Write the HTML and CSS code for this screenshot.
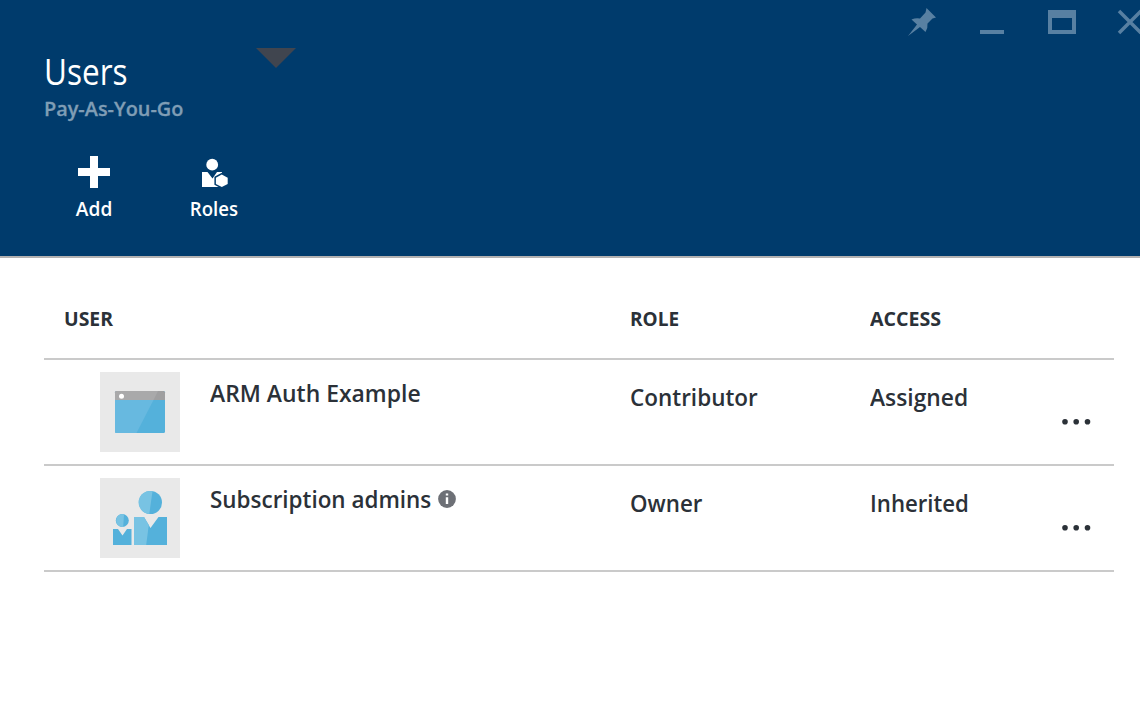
FILE: index.html
```html
<!DOCTYPE html>
<html lang="en">
<head>
<meta charset="utf-8">
<title>Users</title>
<link rel="stylesheet" href="styles.css">
</head>
<body>
<header class="blade-header">
  <svg class="pointer" width="40" height="20" viewBox="0 0 40 20"><path d="M0 0H40L20 20Z" fill="#40454f"/></svg>
  <svg class="window-controls" width="240" height="44" viewBox="0 0 240 44" fill="#5880a2">
    <path d="M26.500 8L36 17.500L32.500 18.500L27.500 23.500Q28 28 25.500 32L20 27L8 36L17 24.500L11.500 19.500Q16 17.500 20 18.500L25.500 12.500Z"/>
    <path d="M80 30H104V34H80Z"/>
    <path fill-rule="evenodd" d="M148 10H176V34H148ZM152 18V30H172V18Z"/>
    <path d="M219 11L241 33M241 11L219 33" stroke="#5880a2" stroke-width="3.500"/>
  </svg>
  <h1 class="title"><span class="fit t-users">Users</span></h1>
  <p class="subtitle"><span class="fit t-plan">Pay-As-You-Go</span></p>
  <nav class="toolbar">
    <a class="command">
      <svg width="32" height="36" viewBox="0 0 32 36" fill="#fff"><path d="M12 0H20V12H32V20H20V32H12V20H0V12H12Z"/></svg>
      <span class="label label-add">Add</span>
    </a>
    <a class="command">
      <svg width="32" height="36" viewBox="0 0 32 36" fill="#fff">
        <circle cx="14.200" cy="8.700" r="5.900"/>
        <path d="M4 16H9.500L14.500 22.500L19 16H24V31H4Z"/>
        <path d="M23.800 18.500L29.700 21.700V27.900L23.800 31L17.900 27.900V21.700Z" stroke="#003b6c" stroke-width="3" paint-order="stroke"/>
      </svg>
      <span class="label label-roles">Roles</span>
    </a>
  </nav>
</header>
<main class="grid">
  <div class="row head">
    <span class="fit h-user">USER</span><span class="fit h-role">ROLE</span><span class="fit h-access">ACCESS</span>
  </div>
  <div class="row item">
    <svg class="tile" width="80" height="80" viewBox="0 0 80 80">
      <rect width="80" height="80" fill="#e9e9e9"/>
      <rect x="15" y="19" width="50" height="42" rx="1.500" fill="#54b1db"/>
      <path d="M15 28H53.500L36.500 61H16.500Q15 61 15 59.500Z" fill="#67b9e0"/>
      <path d="M15 28V20.500Q15 19 16.500 19H63.500Q65 19 65 20.500V28Z" fill="#9f9fa0"/>
      <path d="M15 28V20.500Q15 19 16.500 19H58L53.500 28Z" fill="#a9a9aa"/>
      <circle cx="21.500" cy="24.300" r="2.500" fill="#fff"/>
    </svg>
    <span class="name"><span class="fit t-arm">ARM Auth Example</span></span>
    <span class="fit cell t-contributor">Contributor</span>
    <span class="fit cell t-assigned">Assigned</span>
    <svg class="more" width="30" height="8" viewBox="0 0 30 8" fill="#2b3138"><circle cx="3" cy="3.700" r="2.800"/><circle cx="14.200" cy="3.700" r="2.800"/><circle cx="25.500" cy="3.700" r="2.800"/></svg>
  </div>
  <div class="row item">
    <svg class="tile" width="80" height="80" viewBox="0 0 80 80">
      <rect width="80" height="80" fill="#e9e9e9"/>
      <circle cx="50.500" cy="24.500" r="11.500" fill="#54b1db"/>
      <path d="M52.500 13.200A11.500 11.500 0 1 0 49.300 35.900Z" fill="#78c3e3"/>
      <path d="M34 39H44L50.500 50L58.500 39H67V67H34Z" fill="#54b1db"/>
      <path d="M34 39H44L48.800 47L46.200 67H34Z" fill="#78c3e3"/>
      <circle cx="22.300" cy="42.500" r="6.500" fill="#54b1db"/>
      <path d="M24 36.200A6.500 6.500 0 1 0 23.200 49Z" fill="#78c3e3"/>
      <path d="M13 51H18L22.500 57.500L27 51H31.500V67H13Z" fill="#54b1db"/>
    </svg>
    <span class="name"><span class="fit t-sub">Subscription admins</span>
      <svg class="info" width="18" height="18" viewBox="0 0 18 18"><circle cx="9" cy="9" r="8.900" fill="#6d7076"/><path d="M7.800 3.500H10.200V5.500H7.800ZM7.800 7.300H10.200V13.900H7.800Z" fill="#fff"/></svg>
    </span>
    <span class="fit cell t-owner">Owner</span>
    <span class="fit cell t-inherited">Inherited</span>
    <svg class="more" width="30" height="8" viewBox="0 0 30 8" fill="#2b3138"><circle cx="3" cy="3.700" r="2.800"/><circle cx="14.200" cy="3.700" r="2.800"/><circle cx="25.500" cy="3.700" r="2.800"/></svg>
  </div>
</main>
</body>
</html>
```

FILE: styles.css
```css
* { box-sizing: border-box; }
body {
  margin: 0;
  height: 705px;
  overflow: hidden;
  background: #fff;
  color: #2b3138;
  font-family: "Open Sans", "Noto Sans", sans-serif;
  font-weight: 600;
}
svg { display: block; flex: none; }
.blade-header {
  position: relative;
  height: 258px;
  padding: 50px 0 0 44px;
  background: #003b6c;
  border-bottom: 2px solid #b3b1b1;
  color: #fff;
  overflow: hidden;
}
.pointer { position: absolute; left: 256px; top: 48px; }
.window-controls { position: absolute; left: 900px; top: 0; }
.fit { display: inline-block; transform-origin: 0 50%; white-space: nowrap; }
.title { margin: 0; height: 44px; font-size: 36px; line-height: 44px; font-weight: 400; }
.t-users { transform: scaleX(0.875); }
.subtitle { margin: 2px 0 0; height: 26px; font-size: 20px; line-height: 26px; font-weight: 600; color: #7f9db5; }
.t-plan { transform: scaleX(0.993); -webkit-text-stroke: 0.3px #7f9db5; }
.toolbar { display: flex; margin-top: 34px; margin-left: -10px; }
.command { width: 120px; display: flex; flex-direction: column; align-items: center; }
.label { font-size: 20px; line-height: 28px; margin-top: 3px; white-space: nowrap; }
.label-add { transform: scaleX(0.955); }
.label-roles { transform: scaleX(0.93); }
.grid { width: 1070px; margin-left: 44px; }
.row {
  display: grid;
  grid-template-columns: 56px 110px 420px 240px 192px 1fr;
  border-bottom: 2px solid #cacaca;
}
.head { height: 102px; padding-top: 46px; font-size: 20px; line-height: 30px; font-weight: 700; }
.h-user { grid-column: 1 / 4; margin-left: 20px; transform: scaleX(0.97); }
.h-role { transform: scaleX(0.95); }
.h-access { transform: scaleX(0.98); }
.item { height: 106px; padding-top: 12px; font-size: 24px; line-height: 32px; white-space: nowrap; }
.tile { grid-column: 2; }
.name { display: flex; align-items: center; height: 32px; margin-top: 5px; }
.cell { margin-top: 9px; }
.info { margin-top: -1px; }
.more { margin-top: 46px; }
.t-arm { transform: scaleX(0.955); }
.t-sub { width: 228px; transform: scaleX(0.935); }
.t-contributor { transform: scaleX(0.937); }
.t-owner { transform: scaleX(0.93); }
.t-assigned { transform: scaleX(0.95); }
.t-inherited { transform: scaleX(0.925); }
```
